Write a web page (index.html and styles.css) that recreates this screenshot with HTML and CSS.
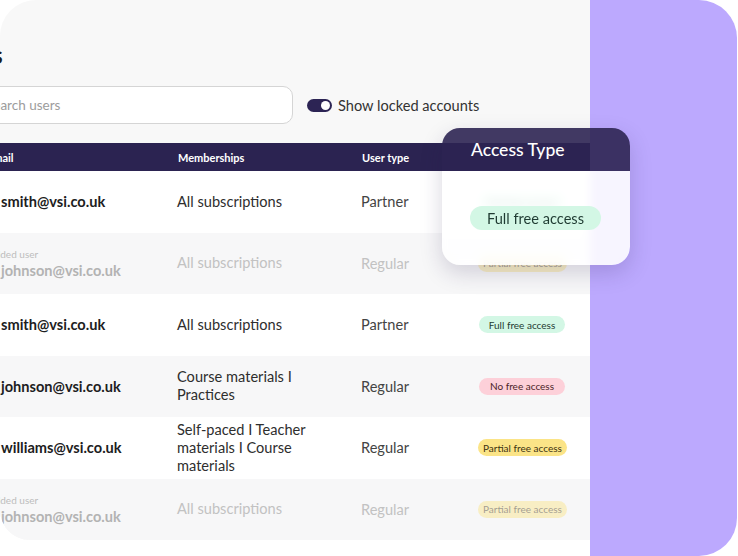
FILE: index.html
```html
<!DOCTYPE html>
<html lang="en">
<head>
<meta charset="utf-8">
<title>Users</title>
<link rel="stylesheet" href="styles.css">
</head>
<body>
<div class="stage">
  <section class="panel">
    <div class="content">
      <h1 class="title">Users</h1>
      <div class="toolbar">
        <label class="search">
          <svg class="search-icon" viewBox="0 0 16 16" width="16" height="16"><circle cx="7" cy="7" r="5" fill="none" stroke="#9a9a9a" stroke-width="1.6"/><path d="M11 11l3.5 3.5" stroke="#9a9a9a" stroke-width="1.6" stroke-linecap="round"/></svg>
          <input class="search-input" type="text" placeholder="Search users">
        </label>
        <div class="toggle-wrap">
          <span class="toggle"><span class="knob"></span></span>
          <span class="toggle-label">Show locked accounts</span>
        </div>
      </div>
      <div class="table">
        <div class="row thead">
          <div class="cell">Email</div>
          <div class="cell">Memberships</div>
          <div class="cell">User type</div>
          <div class="cell hidden-head">Access Type</div>
        </div>
        <div class="row white">
          <div class="cell email"><span class="addr">smith@vsi.co.uk</span></div>
          <div class="cell mem">All subscriptions</div>
          <div class="cell type">Partner</div>
          <div class="cell acc"><span class="badge green">Full free access</span></div>
        </div>
        <div class="row grey faded">
          <div class="cell email"><span class="note">Added user</span><span class="addr">johnson@vsi.co.uk</span></div>
          <div class="cell mem">All subscriptions</div>
          <div class="cell type">Regular</div>
          <div class="cell acc"><span class="badge yellow">Partial free access</span></div>
        </div>
        <div class="row white">
          <div class="cell email"><span class="addr">smith@vsi.co.uk</span></div>
          <div class="cell mem">All subscriptions</div>
          <div class="cell type">Partner</div>
          <div class="cell acc"><span class="badge green">Full free access</span></div>
        </div>
        <div class="row grey">
          <div class="cell email"><span class="addr">johnson@vsi.co.uk</span></div>
          <div class="cell mem">Course materials I Practices</div>
          <div class="cell type">Regular</div>
          <div class="cell acc"><span class="badge pink">No free access</span></div>
        </div>
        <div class="row white">
          <div class="cell email"><span class="addr">williams@vsi.co.uk</span></div>
          <div class="cell mem">Self-paced I Teacher materials I Course materials</div>
          <div class="cell type">Regular</div>
          <div class="cell acc"><span class="badge yellow">Partial free access</span></div>
        </div>
        <div class="row grey faded">
          <div class="cell email"><span class="note">Added user</span><span class="addr">johnson@vsi.co.uk</span></div>
          <div class="cell mem">All subscriptions</div>
          <div class="cell type">Regular</div>
          <div class="cell acc"><span class="badge yellow">Partial free access</span></div>
        </div>
      </div>
    </div>
  </section>
  <aside class="accent"></aside>
  <div class="popover">
    <div class="popover-head">Access Type</div>
    <div class="popover-body"><span class="big-badge">Full free access</span></div>
  </div>
</div>
</body>
</html>
```

FILE: styles.css
```css
* { box-sizing: border-box; }
html, body { margin: 0; padding: 0; }
body {
  width: 738px;
  height: 556px;
  overflow: hidden;
  background: #ffffff;
  font-family: "Lato", "Noto Sans", sans-serif;
  color: #222;
}
.stage {
  position: relative;
  display: flex;
  width: 738px;
  height: 556px;
}
.panel {
  width: 590px;
  height: 540px;
  background: #f8f8f8;
  border-radius: 36px 0 0 30px;
  overflow: hidden;
  flex: none;
}
.accent {
  width: 147px;
  height: 556px;
  background: #bca9fe;
  border-radius: 0 38px 38px 0;
  flex: none;
}
.content {
  margin-left: -60px;
  width: 650px;
  padding-top: 38px;
}
.title {
  margin: 0;
  font-size: 25px;
  line-height: 32px;
  font-weight: 700;
  color: #1b1b1b;
}
.toolbar {
  margin-top: 16px;
  display: flex;
  align-items: center;
  height: 38px;
}
.search {
  width: 353px;
  height: 38px;
  background: #fff;
  border: 1px solid #d5d5d5;
  border-radius: 10px;
  display: flex;
  align-items: center;
  gap: 15px;
  padding-left: 14px;
}
.search-icon { flex: none; }
.search-input {
  border: none;
  outline: none;
  background: transparent;
  font: inherit;
  font-size: 13.5px;
  color: #333;
  padding: 0;
  width: 280px;
}
.search-input::placeholder { color: #9c9c9c; }
.toggle-wrap {
  margin-left: 14px;
  display: flex;
  align-items: center;
  gap: 6px;
}
.toggle {
  width: 25px;
  height: 13px;
  border-radius: 7px;
  background: #2c2454;
  display: flex;
  align-items: center;
  justify-content: flex-end;
  padding-right: 2px;
}
.knob {
  width: 9px;
  height: 9px;
  border-radius: 50%;
  background: #fff;
}
.toggle-label {
  font-size: 14.6px;
  color: #333;
}
.table { margin-top: 19px; }
.row {
  display: grid;
  grid-template-columns: 190px 184px 117px 1fr;
  padding-left: 47px;
  height: 61.5px;
  align-items: center;
}
.thead {
  height: 28px;
  background: #2b2351;
  color: #fff;
  font-size: 11px;
  font-weight: 700;
}
.thead .cell:nth-child(2), .thead .cell:nth-child(3) { padding-left: 1px; }
.hidden-head { visibility: hidden; }
.white { background: #ffffff; }
.grey { background: #f7f7f8; }
.cell { min-width: 0; }
.acc { display: flex; align-items: center; }
.email {
  padding-left: 14px;
  display: flex;
  flex-direction: column;
  overflow: hidden;
}
.addr {
  font-size: 14.6px;
  font-weight: 700;
  color: #1d1d22;
  line-height: 19px;
  white-space: nowrap;
}
.note {
  font-size: 10px;
  line-height: 14px;
  color: #bdbdbd;
  margin-left: -13px;
  white-space: nowrap;
}
.mem {
  font-size: 14.6px;
  line-height: 18px;
  color: #2e2e2e;
  padding-right: 30px;
}
.type {
  font-size: 14.6px;
  color: #444;
}
.faded .addr { color: #b3b3b3; }
.faded .mem, .faded .type { color: #c2c2c2; }
.faded .badge { opacity: 0.45; }
.badge {
  display: inline-flex;
  justify-content: center;
  align-items: center;
  min-width: 86px;
  height: 17px;
  padding: 0 5px;
  border-radius: 9px;
  font-size: 10px;
  line-height: 1;
  margin-left: 1px;
  white-space: nowrap;
}
.green { background: #d3f7e5; color: #1f3b32; }
.pink { background: #fdd0d9; color: #4b1e27; }
.yellow { background: #fbe487; color: #3b3210; margin-left: 0; }
.popover {
  position: absolute;
  left: 442px;
  top: 128px;
  width: 188px;
  height: 137px;
  border-radius: 18px;
  overflow: hidden;
  box-shadow: 0 8px 22px rgba(40, 30, 80, 0.18);
  display: flex;
  flex-direction: column;
}
.popover-head {
  height: 43px;
  background: rgba(44, 35, 82, 0.9);
  color: #fff;
  font-size: 17.5px;
  font-weight: 500;
  padding-left: 29px;
  display: flex;
  align-items: center;
  padding-bottom: 1px;
}
.popover-body {
  flex: 1;
  background: rgba(255, 255, 255, 0.88);
  backdrop-filter: blur(4px);
  display: flex;
  align-items: center;
  padding-left: 28px;
}
.big-badge {
  height: 24px;
  width: 131px;
  border-radius: 12px;
  background: #d3f7e5;
  color: #1f3b32;
  font-size: 14.6px;
  display: flex;
  align-items: center;
  justify-content: center;
}
```
